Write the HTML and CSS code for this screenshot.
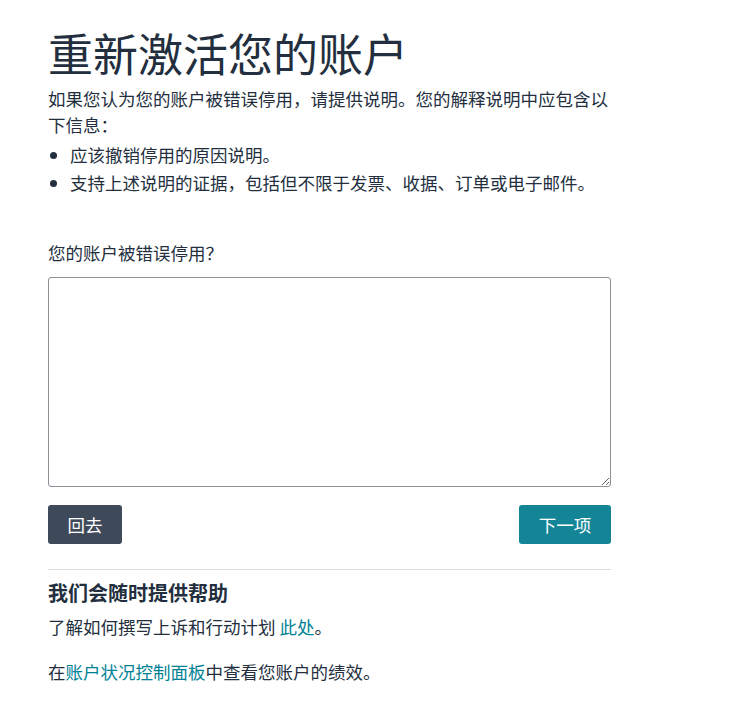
FILE: index.html
```html
<!DOCTYPE html>
<html lang="zh-CN">
<head>
  <meta charset="UTF-8" />
  <meta name="viewport" content="width=device-width, initial-scale=1.0" />
  <title>重新激活您的账户</title>
  <link rel="stylesheet" href="styles.css">
</head>
<body>

  <div class="page">
    <h1>重新激活您的账户</h1>
    <p class="intro">如果您认为您的账户被错误停用，请提供说明。您的解释说明中应包含以下信息：</p>
    <ul class="points">
      <li>应该撤销停用的原因说明。</li>
      <li>支持上述说明的证据，包括但不限于发票、收据、订单或电子邮件。</li>
    </ul>

    <label class="field-label" for="reason">您的账户被错误停用？</label>
    <textarea id="reason" class="reason"></textarea>

    <div class="actions">
      <button class="btn btn-back">回去</button>
      <button class="btn btn-next">下一项</button>
    </div>

    <div class="help">
      <h2>我们会随时提供帮助</h2>
      <p>了解如何撰写上诉和行动计划 <a href="#">此处</a>。</p>
      <p class="dashboard">在<a href="#">账户状况控制面板</a>中查看您账户的绩效。</p>
    </div>
  </div>

</body>
</html>
```

FILE: styles.css
```css
body {
  margin: 0;
  padding: 0 0 0 48px;
  font-family: "Noto Sans CJK SC", "Noto Sans", sans-serif;
  font-size: 17.5px;
  line-height: 26px;
  color: #232f3e;
  background: #fff;
}
.page {
  width: 563px;
}
h1 {
  font-size: 45px;
  font-weight: 400;
  line-height: 53px;
  margin: 26px 0 7px 0;
}
.intro {
  margin: 0;
}
.points {
  margin: 4px 0 0 0;
  padding: 0 0 0 22px;
}
.points li {
  margin-bottom: 2px;
}
.field-label {
  display: block;
  margin-top: 44px;
}
.reason {
  display: block;
  box-sizing: border-box;
  width: 563px;
  height: 210px;
  margin-top: 11px;
  border: 1px solid #8d9096;
  border-radius: 3px;
  font: inherit;
  resize: vertical;
}
.actions {
  display: flex;
  justify-content: space-between;
  margin-top: 18px;
  padding-bottom: 25px;
  border-bottom: 1px solid #dddddd;
}
.btn {
  height: 39px;
  border: none;
  border-radius: 3px;
  color: #fff;
  font-family: inherit;
  font-size: 17.5px;
  padding: 0 19px;
  cursor: pointer;
}
.btn-back {
  background: #3e4a5a;
  width: 74px;
}
.btn-next {
  background: #148596;
  width: 92px;
}
.help h2 {
  font-size: 20px;
  font-weight: 700;
  line-height: 26px;
  margin: 10px 0 8px 0;
}
.help p {
  margin: 0;
}
.help .dashboard {
  margin-top: 19px;
}
.help a {
  color: #008296;
  text-decoration: none;
}
```
